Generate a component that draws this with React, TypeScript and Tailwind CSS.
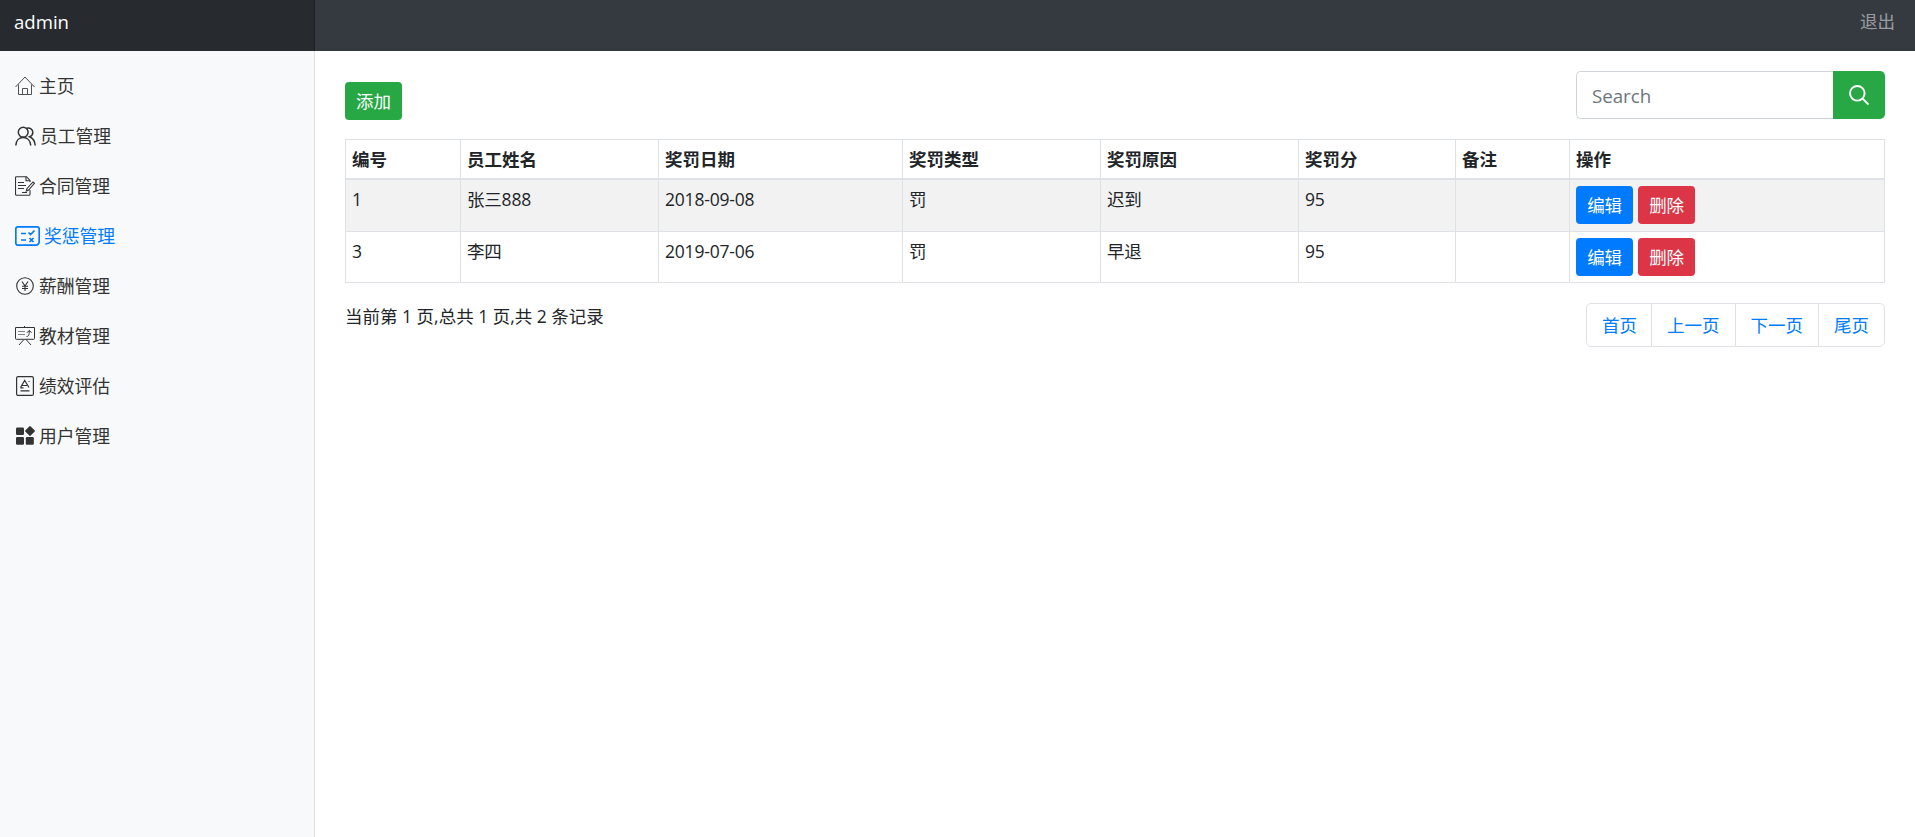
import type { ReactNode } from "react";

type MenuItem = {
  label: string;
  icon: ReactNode;
  active?: boolean;
};

type Reward = {
  id: number;
  name: string;
  date: string;
  type: string;
  reason: string;
  score: number;
  remark: string;
};

const menu: MenuItem[] = [
  {
    label: "主页",
    icon: (
      <svg width="20" height="20" viewBox="0 0 20 20" fill="none" stroke="currentColor" strokeWidth="1" opacity=".85">
        <path d="M.5 11 10 1l9.500 10M3.500 8.500v10h13v-10M7.500 18.500v-6h5v6" />
      </svg>
    ),
  },
  {
    label: "员工管理",
    icon: (
      <svg width="21" height="20" viewBox="0 0 21 20" fill="none" stroke="currentColor" strokeWidth="1.5">
        <circle cx="8.200" cy="6.200" r="4.900" />
        <path d="M.8 19.500c.2-4.800 3.200-8 7.400-8s7.200 3.200 7.600 8" />
        <path d="M11.500 2.300c3.700-.8 6.300 1.200 6.300 4.100 0 2-1.200 3.500-3.200 4.300 3.400 1.500 5.300 4.600 5.600 8.800" />
      </svg>
    ),
  },
  {
    label: "合同管理",
    icon: (
      <svg width="20" height="20" viewBox="0 0 20 20" fill="none" stroke="currentColor" strokeWidth="1.100">
        <path d="M15 6V4.500L11.500.7H1.500a1 1 0 0 0-1 1v16.600a1 1 0 0 0 1 1H14a1 1 0 0 0 1-1V14" />
        <path d="M11 .7v4h4M3 6.500h6M3 9.500h8M3 12.500h6M7 16.500h5" />
        <path d="m12 12.500 6-6.500 1.500 1.300-6 6.700-2.200 1z" />
      </svg>
    ),
  },
  {
    label: "奖惩管理",
    active: true,
    icon: (
      <svg width="25" height="20" viewBox="0 0 25 20" fill="none" stroke="currentColor" strokeWidth="1.700">
        <path d="M3 .8h19a2.200 2.200 0 0 1 2.200 2.200v12c0 2.500-1.700 4.200-4.200 4.200H3A2.200 2.200 0 0 1 .8 17V3A2.200 2.200 0 0 1 3 .8z" />
        <path d="M6 7.500h5M6 14h5M13.500 6.500l2 2 4-4M14.500 12l4 4M18.500 12l-4 4" />
      </svg>
    ),
  },
  {
    label: "薪酬管理",
    icon: (
      <svg width="20" height="20" viewBox="0 0 20 20" fill="none" stroke="currentColor" strokeWidth="1.100">
        <circle cx="10" cy="10" r="8.300" />
        <path d="M7 5.500 10 10l3-4.500M10 10v5M7 10.200h6M7 12.500h6" />
      </svg>
    ),
  },
  {
    label: "教材管理",
    icon: (
      <svg width="20" height="20" viewBox="0 0 20 20" fill="none" stroke="currentColor" strokeWidth="1">
        <path d="M.5 1.500h19V12.500a.8.8 0 0 1-.8.8H1.300a.8.8 0 0 1-.8-.8zM9.500 0v1.500M8.500 14 4 19M11.500 14l4.500 5" />
        <path d="M3 5.500h7M3 8.500h7" opacity=".6" />
        <path d="M11.500 10.500c2 0 2.800-1.500 2.800-5.500M12 6.800l2.300-2.500 2.200 2.500" />
      </svg>
    ),
  },
  {
    label: "绩效评估",
    icon: (
      <svg width="20" height="20" viewBox="0 0 20 20" fill="none" stroke="currentColor" strokeWidth="1.200">
        <rect x="1.600" y=".6" width="16.800" height="18.800" rx="1.500" />
        <path d="M5.500 11.500 9.700 4.500 14 11.500M7 9.500h5M5.500 14.800h9M13.500 5.500h1M5.500 11.800h3" />
      </svg>
    ),
  },
  {
    label: "用户管理",
    icon: (
      <svg width="20" height="20" viewBox="0 0 20 20" fill="currentColor">
        <rect x="1" y="1.500" width="8" height="7.500" rx="1.200" />
        <rect x="1" y="11" width="8" height="7.800" rx="1.200" />
        <rect x="10.800" y="11" width="8" height="7.800" rx="1.200" />
        <rect x="11.300" y="1.300" width="7.400" height="7.400" rx="1" transform="rotate(45 15 5)" />
      </svg>
    ),
  },
];

const columns = ["编号", "员工姓名", "奖罚日期", "奖罚类型", "奖罚原因", "奖罚分", "备注", "操作"];

const rows: Reward[] = [
  { id: 1, name: "张三888", date: "2018-09-08", type: "罚", reason: "迟到", score: 95, remark: "" },
  { id: 3, name: "李四", date: "2019-07-06", type: "罚", reason: "早退", score: 95, remark: "" },
];

const pages = ["首页", "上一页", "下一页", "尾页"];

function Cell({ children }: { children?: ReactNode }) {
  return <td className="border border-[#dee2e6] px-1.5 py-1.5 align-top leading-[26px] tracking-[-0.2px]">{children}</td>;
}

export default function App() {
  return (
    <div className="flex h-screen flex-col overflow-hidden bg-white font-['Open_Sans','Noto_Sans_CJK_SC',sans-serif] text-[17.5px] font-normal text-[#212529]">
      {/* Navbar */}
      <header className="flex h-[51px] shrink-0 bg-[#343a40]">
        <a href="#" className="w-[315px] bg-black/25 pl-3.5 text-[18.6px] leading-[44px] text-white shadow-[inset_-1px_0_0_rgba(0,0,0,0.25)]">
          admin
        </a>
        <a href="#" className="ml-auto pr-5 leading-[43px] text-white/50">退出</a>
      </header>

      <div className="flex flex-1">
        {/* Sidebar */}
        <nav className="w-[315px] shrink-0 bg-[#f8f9fa] pt-2.5 shadow-[inset_-1px_0_0_rgba(0,0,0,0.1)]">
          {menu.map((item) => (
            <a
              key={item.label}
              href="#"
              className={`flex h-[50px] items-center gap-1 pl-[15px] text-[17.8px] ${item.active ? "text-[#007bff]" : "text-[#333]"}`}
            >
              {item.icon}
              <span>{item.label}</span>
            </a>
          ))}
        </nav>

        <main className="flex-1 pt-5 pr-[30px] pl-[30px]">
          {/* Toolbar */}
          <div className="flex h-[68px] items-start justify-between">
            <button className="mt-[11px] h-[38px] w-[57px] rounded-[4px] bg-[#28a745] text-white">添加</button>
            <form className="flex h-12">
              <input
                className="w-[257px] rounded-l-[5px] border border-r-0 border-[#ced4da] px-[15px] pt-0.5 text-[18.7px] outline-none placeholder:text-[#6c757d]"
                placeholder="Search"
              />
              <button type="button" className="flex w-[52px] items-center justify-center rounded-r-[5px] bg-[#28a745] text-white">
                <svg width="20" height="20" viewBox="0 0 20 20" fill="none" stroke="currentColor" strokeWidth="1.900">
                  <circle cx="8.300" cy="8.300" r="7.300" />
                  <path d="m13.500 13.500 6 6" />
                </svg>
              </button>
            </form>
          </div>

          {/* Records */}
          <table className="w-[1540px] table-fixed border-collapse border border-[#dee2e6]">
            <colgroup>
              <col className="w-[115px]" />
              <col className="w-[198px]" />
              <col className="w-[244px]" />
              <col className="w-[198px]" />
              <col className="w-[198px]" />
              <col className="w-[157px]" />
              <col className="w-[114px]" />
              <col />
            </colgroup>
            <thead>
              <tr className="h-[39px]">
                {columns.map((c) => (
                  <th key={c} className="border border-b-2 border-[#dee2e6] px-1.5 pt-px text-left leading-[26px] font-bold">{c}</th>
                ))}
              </tr>
            </thead>
            <tbody>
              {rows.map((r) => (
                <tr key={r.id} className="odd:h-[52.500px] even:h-[51px] odd:bg-[#f2f2f2]">
                  <Cell>{r.id}</Cell>
                  <Cell>{r.name}</Cell>
                  <Cell>{r.date}</Cell>
                  <Cell>{r.type}</Cell>
                  <Cell>{r.reason}</Cell>
                  <Cell>{r.score}</Cell>
                  <Cell>{r.remark}</Cell>
                  <Cell>
                    <div className="flex gap-[5px]">
                      <button className="h-[38px] w-[57px] rounded-[4px] bg-[#007bff] text-white">编辑</button>
                      <button className="h-[38px] w-[57px] rounded-[4px] bg-[#dc3545] text-white">删除</button>
                    </div>
                  </Cell>
                </tr>
              ))}
            </tbody>
          </table>

          {/* Paging */}
          <div className="mt-5 flex items-start justify-between">
            <div className="leading-[27px]">当前第 1 页,总共 1 页,共 2 条记录</div>
            <ul className="flex h-11 divide-x divide-[#dee2e6] rounded-[5px] border border-[#dee2e6] text-[#007bff]">
              {pages.map((p) => (
                <li key={p} className="flex items-center px-[15px] pt-px first:pr-3.5">
                  <a href="#">{p}</a>
                </li>
              ))}
            </ul>
          </div>
        </main>
      </div>
    </div>
  );
}
